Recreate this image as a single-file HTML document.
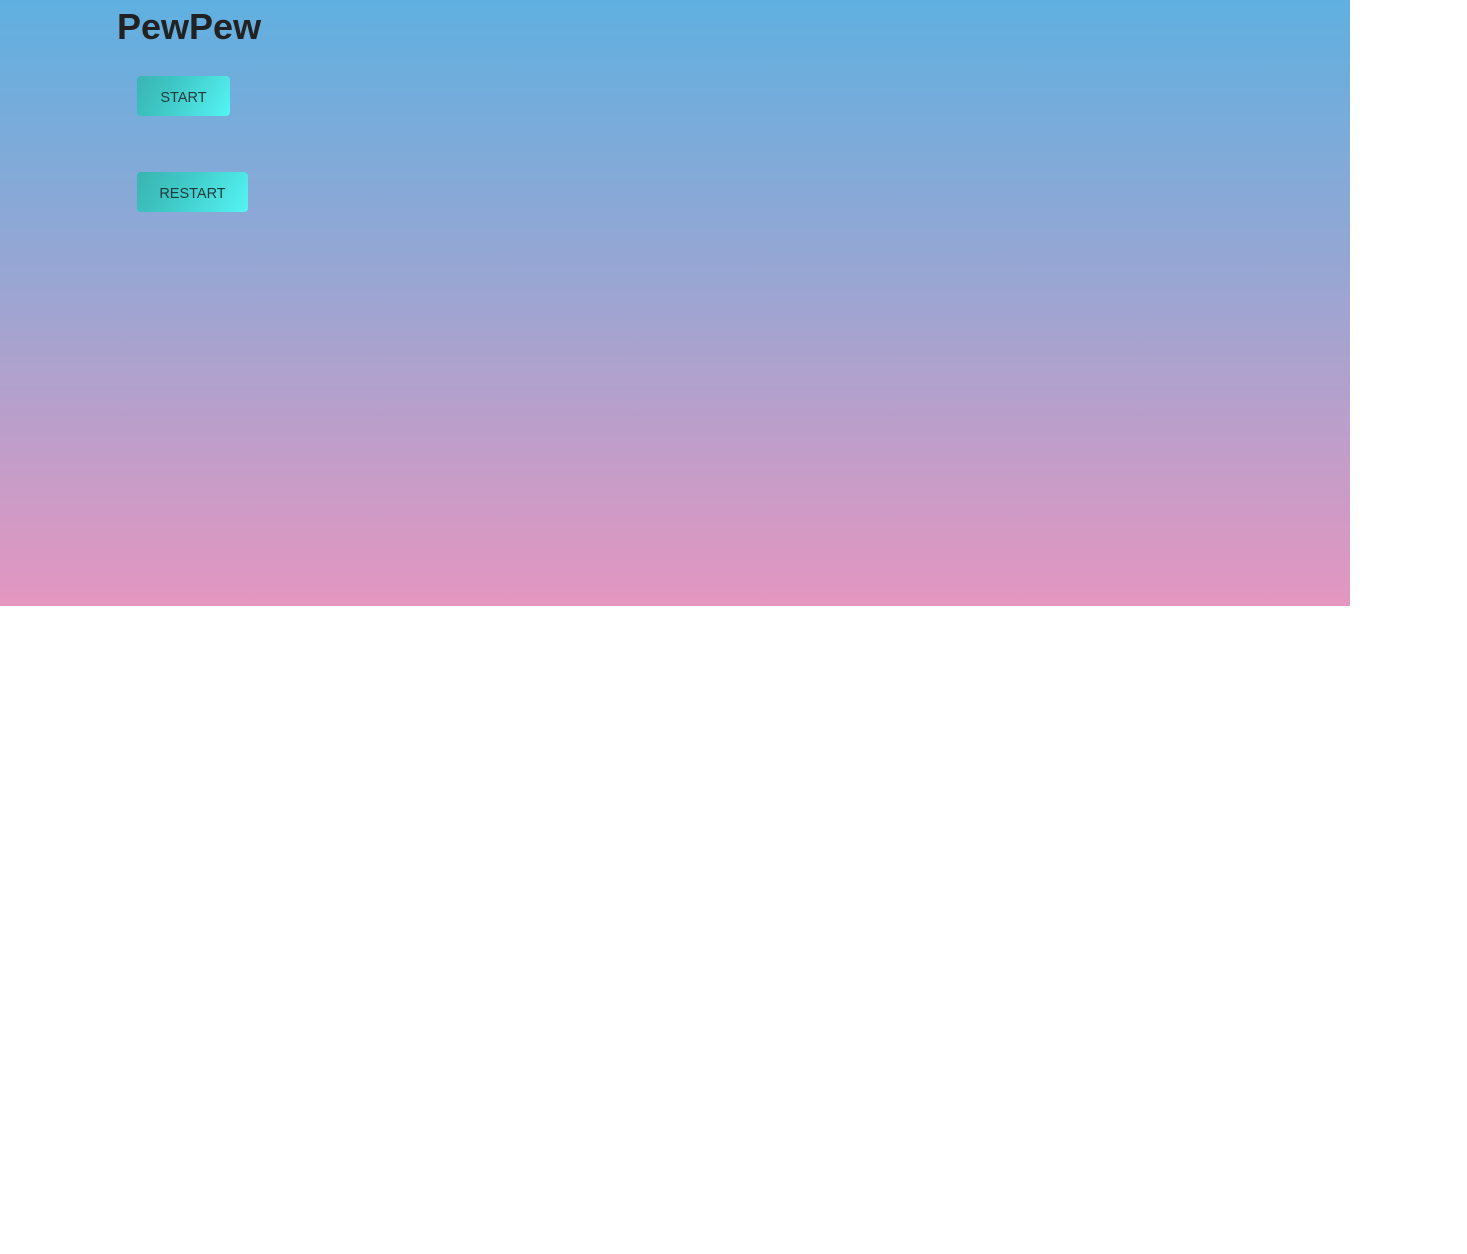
<!DOCTYPE html>
<html><head><style>
html,body{margin:0;padding:0;background:#fff;width:1467px;height:1254px;overflow:hidden}
.bg{position:absolute;left:0;top:0;width:1350px;height:606px;background:linear-gradient(to bottom,#5fb0e0 0%,#98a6d3 45%,#e496c0 100%)}
h1{position:absolute;left:117px;top:6px;margin:0;font:bold 36px "Liberation Sans",sans-serif;color:#222;letter-spacing:0}
.btn{position:absolute;left:137px;height:40px;border-radius:4px;background:linear-gradient(120deg,#3ab4b2 0%,#3ec6c4 35%,#55f4f4 100%);font:14.5px "Liberation Sans",sans-serif;color:#1e3a3a;line-height:44px;text-align:center}
</style></head><body>
<div class="bg"></div>
<h1>PewPew</h1>
<div class="btn" style="top:76px;width:93px">START</div>
<div class="btn" style="top:172px;width:111px">RESTART</div>
</body></html>
